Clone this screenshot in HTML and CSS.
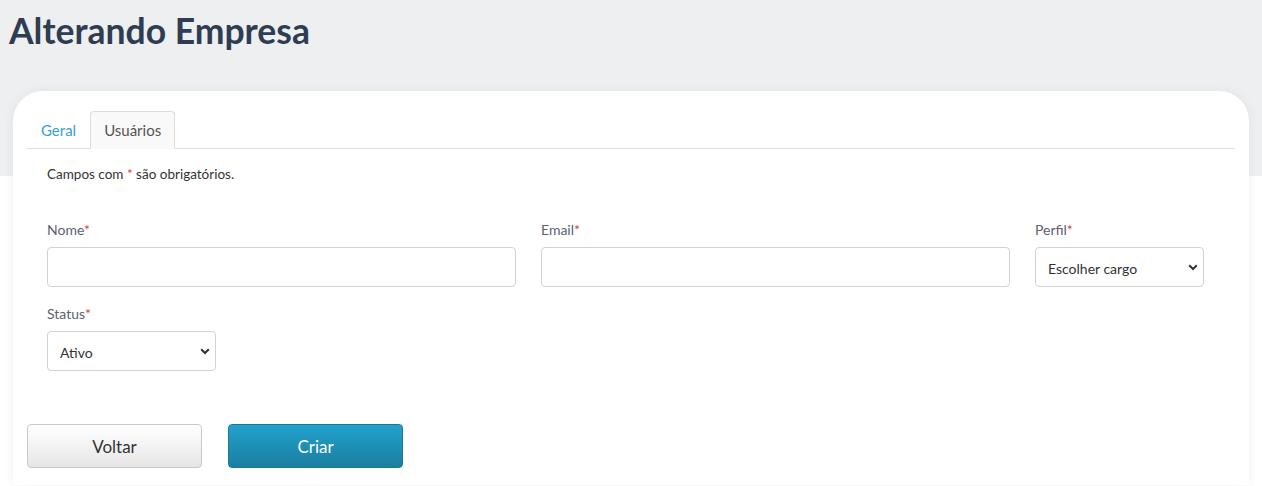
FILE: index.html
```html
<!DOCTYPE html>
<html lang="pt-BR">
<head>
<meta charset="utf-8">
<title>Alterando Empresa</title>
<link rel="stylesheet" href="styles.css">
</head>
<body>
<h1 class="page-title">Alterando Empresa</h1>
<div class="card">
  <ul class="tabs">
    <li class="tab">Geral</li>
    <li class="tab active">Usuários</li>
  </ul>
  <div class="tab-body">
    <p class="hint">Campos com <span class="req">*</span> são obrigatórios.</p>
    <div class="row">
      <div class="field w-wide">
        <label class="label">Nome<span class="req">*</span></label>
        <input class="control" type="text">
      </div>
      <div class="field w-wide">
        <label class="label">Email<span class="req">*</span></label>
        <input class="control" type="text">
      </div>
      <div class="field w-narrow">
        <label class="label">Perfil<span class="req">*</span></label>
        <div class="select-wrap">
          <select class="control select"><option>Escolher cargo</option></select>
          <svg class="chev" viewBox="0 0 10 7" width="10" height="7"><path d="M1.2 1.3 L5 5 L8.8 1.3" fill="none" stroke="#333" stroke-width="2"/></svg>
        </div>
      </div>
    </div>
    <div class="row">
      <div class="field w-narrow">
        <label class="label">Status<span class="req">*</span></label>
        <div class="select-wrap">
          <select class="control select"><option>Ativo</option></select>
          <svg class="chev" viewBox="0 0 10 7" width="10" height="7"><path d="M1.2 1.3 L5 5 L8.8 1.3" fill="none" stroke="#333" stroke-width="2"/></svg>
        </div>
      </div>
    </div>
  </div>
  <div class="actions">
    <button class="btn btn-default">Voltar</button>
    <button class="btn btn-primary">Criar</button>
  </div>
</div>
</body>
</html>
```
FILE: styles.css
```css
* { box-sizing: border-box; }
html, body { margin: 0; padding: 0; }
body {
  font-family: Lato, "Open Sans", sans-serif;
  background: linear-gradient(#eeeff1 0, #eeeff1 176px, #ffffff 176px);
  color: #333;
  min-height: 486px;
}
.page-title {
  margin: 0;
  padding: 11px 9px 0;
  font-size: 35.5px;
  line-height: 40px;
  font-weight: 700;
  color: #2f3d52;
}
.card {
  margin: 40px 0 0 13px;
  width: 1236px;
  background: #fff;
  border-radius: 30px 30px 0 0;
  padding: 20px 14px 17px;
  box-shadow: 0 0 12px rgba(0, 0, 0, 0.06);
}
.tabs {
  list-style: none;
  margin: 0;
  padding: 0;
  display: flex;
  border-bottom: 1px solid #dddddd;
}
.tab {
  padding: 0 13px;
  height: 37px;
  line-height: 37px;
  font-size: 15px;
  color: #3a9fd0;
  border: 1px solid transparent;
  border-bottom: none;
  border-radius: 4px 4px 0 0;
  margin-bottom: -1px;
}
.tab.active {
  color: #555;
  background: #f9f9f9;
  border-color: #dddddd;
  height: 38px;
  border-bottom: 1px solid #f9f9f9;
}
.tab-body { padding: 16px 20px 0; }
.hint {
  margin: 0 0 38px;
  font-size: 13.5px;
  line-height: 18px;
  color: #333;
}
.req { color: #e03a3a; }
.row { display: flex; gap: 25px; margin-bottom: 18px; }
.field { display: flex; flex-direction: column; gap: 9px; }
.w-wide { width: 469px; }
.w-narrow { width: 169px; }
.label {
  font-size: 14px;
  line-height: 17px;
  color: #5b6170;
}
.control {
  height: 40px;
  width: 100%;
  border: 1px solid #d2d2d2;
  border-radius: 4px;
  background: #fff;
  font-family: inherit;
  font-size: 14px;
  color: #333;
  padding: 0 12px;
  outline: none;
}
.select-wrap { position: relative; }
.select { appearance: none; -webkit-appearance: none; padding-top: 2px; }
.chev { position: absolute; right: 6px; top: 17px; pointer-events: none; }
.actions { display: flex; gap: 26px; margin-top: 53px; }
.btn {
  width: 175px;
  height: 44px;
  border-radius: 4px;
  font-family: inherit;
  font-size: 17px;
  cursor: pointer;
}
.btn-default {
  background: linear-gradient(#ffffff, #e6e6e6);
  border: 1px solid #c8c8c8;
  color: #333;
}
.btn-primary {
  background: linear-gradient(#21a2cd, #1a7ea0);
  border: 1px solid #1a7896;
  color: #fff;
}
```
